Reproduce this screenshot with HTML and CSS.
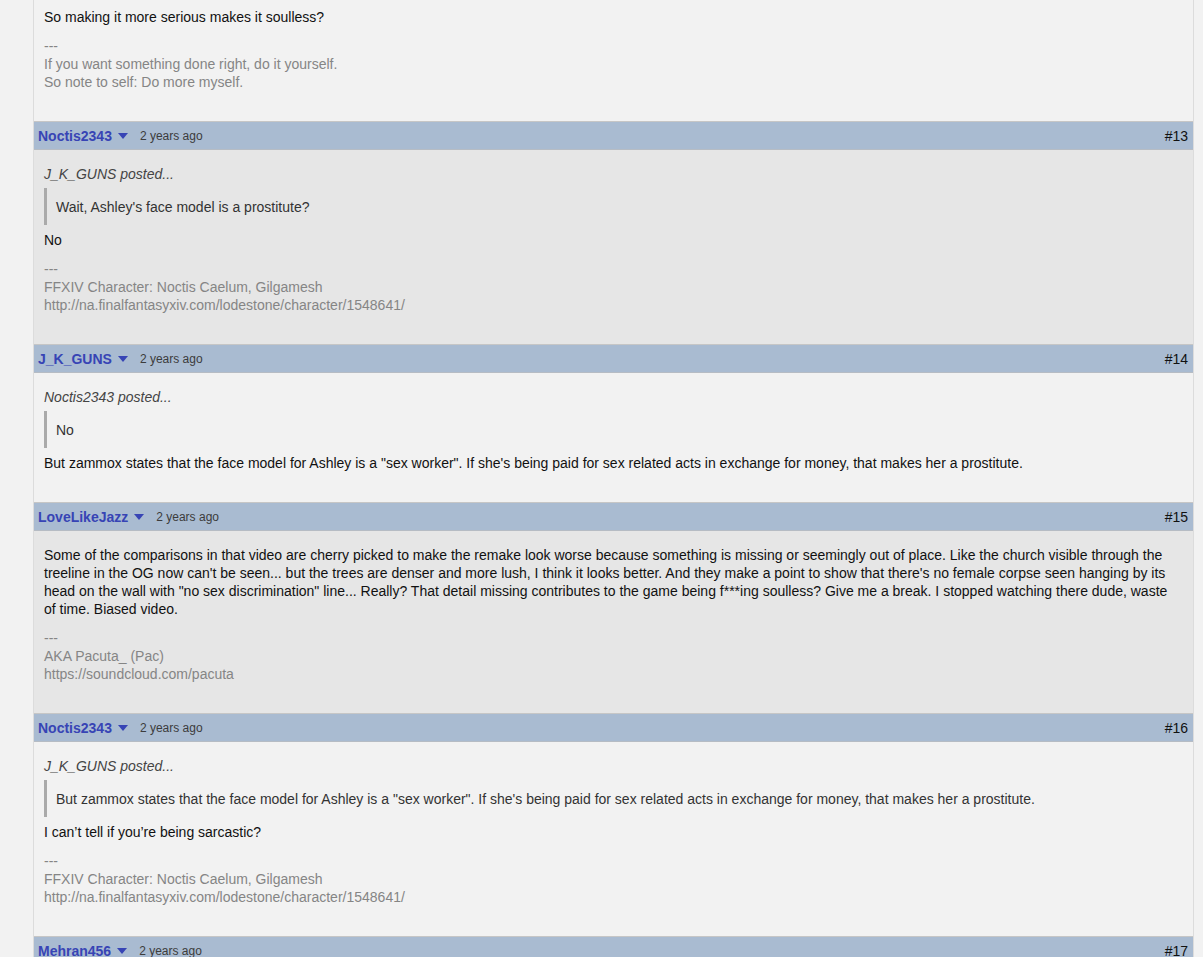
FILE: index.html
```html
<!DOCTYPE html>
<html>
<head>
<meta charset="utf-8">
<link rel="stylesheet" href="styles.css">
</head>
<body>
<div class="thread">
  <div class="post-body light cut">
    <p class="msg">So making it more serious makes it soulless?</p>
    <div class="sig">---<br>If you want something done right, do it yourself.<br>So note to self: Do more myself.</div>
  </div>

  <div class="post-head">
    <span class="user">Noctis2343</span><span class="caret"></span><span class="time">2 years ago</span><span class="num">#13</span>
  </div>
  <div class="post-body dark">
    <div class="qhead">J_K_GUNS posted...</div>
    <blockquote class="quote">Wait, Ashley's face model is a prostitute?</blockquote>
    <p class="msg">No</p>
    <div class="sig">---<br>FFXIV Character: Noctis Caelum, Gilgamesh<br>http://na.finalfantasyxiv.com/lodestone/character/1548641/</div>
  </div>

  <div class="post-head">
    <span class="user">J_K_GUNS</span><span class="caret"></span><span class="time">2 years ago</span><span class="num">#14</span>
  </div>
  <div class="post-body light">
    <div class="qhead">Noctis2343 posted...</div>
    <blockquote class="quote">No</blockquote>
    <p class="msg">But zammox states that the face model for Ashley is a "sex worker". If she's being paid for sex related acts in exchange for money, that makes her a prostitute.</p>
  </div>

  <div class="post-head">
    <span class="user">LoveLikeJazz</span><span class="caret"></span><span class="time">2 years ago</span><span class="num">#15</span>
  </div>
  <div class="post-body dark">
    <p class="msg">Some of the comparisons in that video are cherry picked to make the remake look worse because something is missing or seemingly out of place. Like the church visible through the treeline in the OG now can't be seen... but the trees are denser and more lush, I think it looks better. And they make a point to show that there's no female corpse seen hanging by its head on the wall with "no sex discrimination" line... Really? That detail missing contributes to the game being f***ing soulless? Give me a break. I stopped watching there dude, waste of time. Biased video.</p>
    <div class="sig">---<br>AKA Pacuta_ (Pac)<br>https://soundcloud.com/pacuta</div>
  </div>

  <div class="post-head">
    <span class="user">Noctis2343</span><span class="caret"></span><span class="time">2 years ago</span><span class="num">#16</span>
  </div>
  <div class="post-body light">
    <div class="qhead">J_K_GUNS posted...</div>
    <blockquote class="quote">But zammox states that the face model for Ashley is a "sex worker". If she's being paid for sex related acts in exchange for money, that makes her a prostitute.</blockquote>
    <p class="msg">I can’t tell if you’re being sarcastic?</p>
    <div class="sig">---<br>FFXIV Character: Noctis Caelum, Gilgamesh<br>http://na.finalfantasyxiv.com/lodestone/character/1548641/</div>
  </div>

  <div class="post-head">
    <span class="user">Mehran456</span><span class="caret"></span><span class="time">2 years ago</span><span class="num">#17</span>
  </div>
  <div class="post-body dark">
    <p class="msg">&nbsp;</p>
  </div>
</div>
</body>
</html>
```

FILE: styles.css
```css
html, body {
  margin: 0;
  padding: 0;
  background: #f2f2f2;
}
body {
  font-family: "Liberation Sans", Arial, sans-serif;
  font-size: 14px;
  line-height: 18px;
  color: #111;
  height: 957px;
  overflow: hidden;
}
.thread {
  box-sizing: border-box;
  width: 1161px;
  margin-left: 33px;
  border-left: 1px solid #dcdcdc;
  border-right: 1px solid #dcdcdc;
}
.post-head {
  display: flex;
  align-items: center;
  height: 27px;
  padding: 0 5px 0 4px;
  background: #a9bbd1;
  border-top: 1px solid #c6c6c6;
  border-bottom: 1px solid #b6bcc4;
}
.user {
  font-weight: bold;
  font-size: 14px;
  color: #3744b5;
}
.caret {
  width: 0;
  height: 0;
  margin-left: 6px;
  border-left: 5px solid transparent;
  border-right: 5px solid transparent;
  border-top: 6px solid #3744b5;
}
.time {
  margin-left: 12px;
  font-size: 12px;
  color: #3c3c3c;
}
.num {
  margin-left: auto;
  font-size: 14px;
  color: #111;
}
.post-body {
  padding: 15px 14px 30px 10px;
}
.post-body.cut {
  padding-top: 8px;
}
.light { background: #f2f2f2; }
.dark { background: #e6e6e6; }
.msg {
  margin: 0;
}
.qhead {
  font-style: italic;
  color: #444;
}
.quote {
  margin: 5px 0 6px 0;
  padding: 10px 0 9px 9px;
  border-left: 3px solid #aaa;
  color: #333;
}
.sig {
  margin-top: 11px;
  color: #858585;
}
```
